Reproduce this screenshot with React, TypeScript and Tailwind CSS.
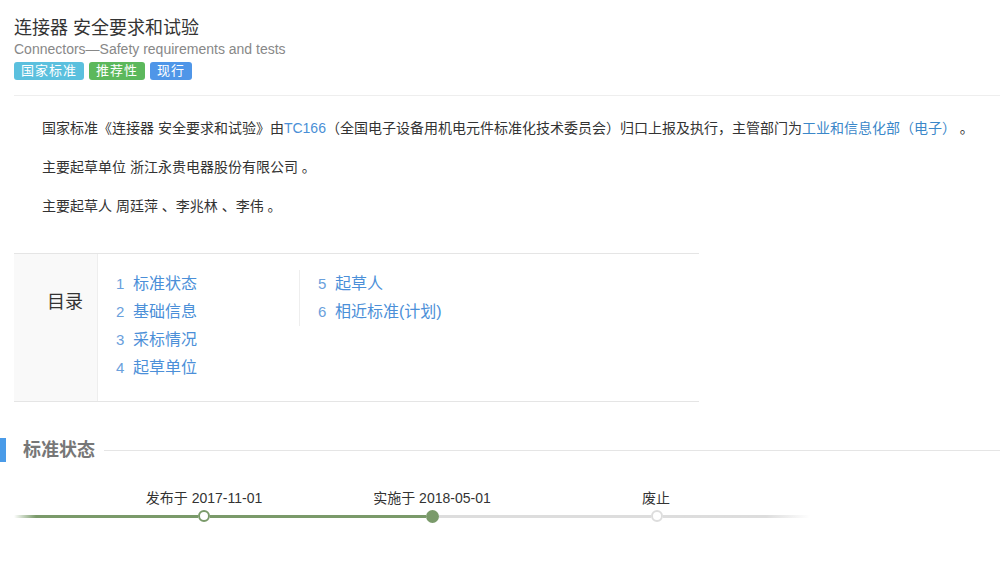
import React from "react";

const tags = [
  { label: "国家标准", color: "bg-[#5bc0de]" },
  { label: "推荐性", color: "bg-[#5cb85c]" },
  { label: "现行", color: "bg-[#4f96e8]" },
];

const tocLeft = ["标准状态", "基础信息", "采标情况", "起草单位"];
const tocRight = ["起草人", "相近标准(计划)"];

function TocItem({ n, label }: { n: number; label: string }) {
  return (
    <li className="flex h-[28px] items-center text-[16px] text-[#4b8fd8]">
      <span className="w-[17px] text-[15px] text-[#6aa0dc]">{n}</span>
      <span>{label}</span>
    </li>
  );
}

export default function App() {
  return (
    <div
      className="w-[1000px] bg-white text-[#333]"
      style={{ fontFamily: '"Liberation Sans", "Noto Sans CJK SC", sans-serif' }}
    >
      <div className="pl-[14px]">
        <h1 className="pt-[16px] text-[18px] leading-[24px] font-normal text-[#333]">
          连接器 安全要求和试验
        </h1>
        <p className="text-[14px] leading-[18px] text-[#888]">
          Connectors—Safety requirements and tests
        </p>
        <div className="mt-[4px] flex gap-[5px]">
          {tags.map((t) => (
            <span
              key={t.label}
              className={`${t.color} flex h-[18px] items-center rounded-[3px] pl-[7px] pr-[7px] text-[13px] tracking-[1px] text-white`}
            >
              {t.label}
            </span>
          ))}
        </div>

        <div className="mt-[15px] border-t border-[#eee] pl-[28px] pt-[13px] text-[14px] leading-[39px]">
          <p>
            国家标准《连接器 安全要求和试验》由
            <span className="text-[#4a8fd6]">TC166</span>
            （全国电子设备用机电元件标准化技术委员会）归口上报及执行，主管部门为
            <span className="text-[#3b87c9]">工业和信息化部（电子）</span> 。
          </p>
          <p>主要起草单位 浙江永贵电器股份有限公司 。</p>
          <p>主要起草人 周廷萍 、李兆林 、李伟 。</p>
        </div>

        <div className="mt-[27px] flex w-[685px] border-y border-[#e5e5e5]">
          <div className="w-[84px] border-r border-[#eee] bg-[#f9f9f9] pr-[14px] pt-[36px] text-right text-[18px] leading-[24px] text-[#333]">
            目录
          </div>
          <div className="flex pt-[16px] pb-[19px]">
            <ul className="w-[201px] pl-[18px]">
              {tocLeft.map((l, i) => (
                <TocItem key={l} n={i + 1} label={l} />
              ))}
            </ul>
            <ul className="h-[56px] border-l border-[#eee] pl-[18px]">
              {tocRight.map((l, i) => (
                <TocItem key={l} n={i + 5} label={l} />
              ))}
            </ul>
          </div>
        </div>
      </div>

      <div className="mt-[36px] flex h-[24px] items-center">
        <div className="h-[24px] w-[6px] bg-[#4a9be8]" />
        <h2 className="ml-[17px] text-[18px] font-bold text-[#777]">标准状态</h2>
        <div className="ml-[9px] h-px flex-1 bg-[#e5e5e5]" />
      </div>

      <div className="mt-[26px] pl-[14px]">
        <div className="flex text-[14px] leading-[20px] text-[#333]">
          <div className="ml-[90px] w-[200px] text-center">发布于 2017-11-01</div>
          <div className="ml-[28px] w-[200px] text-center">实施于 2018-05-01</div>
          <div className="ml-[24px] w-[200px] text-center">废止</div>
        </div>
        <div className="mt-[2px] flex h-[12px] w-[796px] items-center">
          <div className="h-[3px] w-[184px] bg-gradient-to-r from-white to-[#7a9a6a] to-[12%]" />
          <div className="h-[12px] w-[12px] rounded-full border-2 border-[#7a9a6a] bg-white" />
          <div className="h-[3px] w-[216px] bg-[#7a9a6a]" />
          <div className="h-[13px] w-[13px] rounded-full bg-[#7a9a6a]" />
          <div className="h-[3px] w-[212px] bg-[#ddd]" />
          <div className="h-[12px] w-[12px] rounded-full border-2 border-[#ddd] bg-white" />
          <div className="h-[3px] w-[147px] bg-gradient-to-r from-[#ddd] from-[70%] to-white" />
        </div>
      </div>
      <div className="h-[40px]" />
    </div>
  );
}
